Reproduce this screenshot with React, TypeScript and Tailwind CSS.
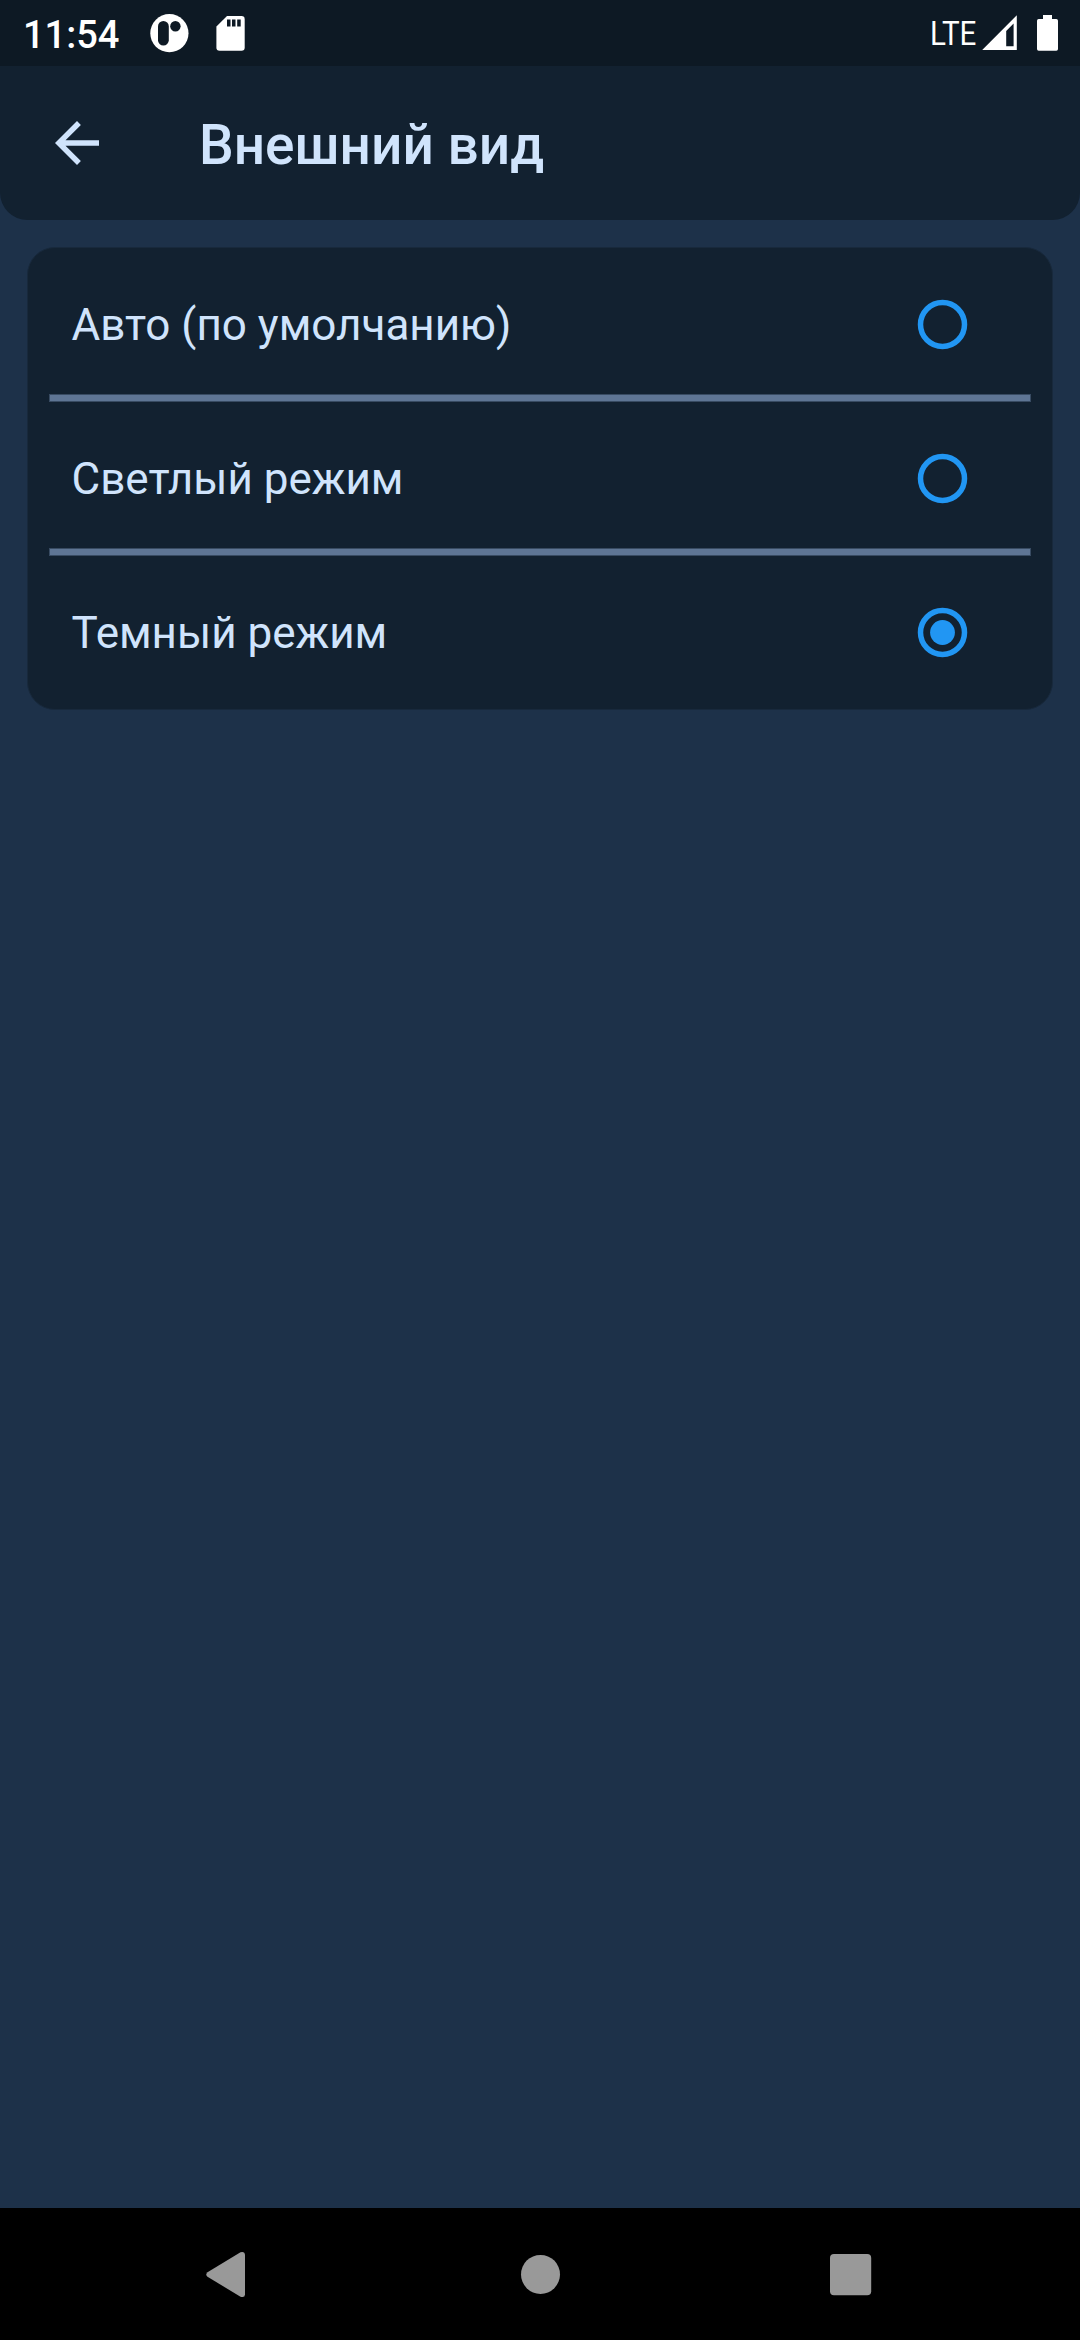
import { useState } from "react";

const options = ["Авто (по умолчанию)", "Светлый режим", "Темный режим"];

function StatusBar() {
  return (
    <div className="flex h-[66px] w-full items-center justify-between bg-[#0d1924] text-white">
      <div className="flex h-full items-center pl-[23px]">
        <span className="w-[123px] pt-[4px] text-[38px] leading-[66px] font-medium whitespace-nowrap">11:54</span>
        <svg className="h-[66px] w-[110px]" viewBox="146 0 110 66">
          <circle cx="169.4" cy="33.2" r="19.1" fill="#fff" />
          <rect x="158" y="21" width="10.8" height="24.6" rx="5.4" fill="#0d1924" />
          <circle cx="175.4" cy="26.3" r="5.2" fill="#0d1924" />
          <path
            d="M227 16H241.5a3.2 3.2 0 0 1 3.2 3.2V47.6a3.2 3.2 0 0 1-3.2 3.2H219.6a3.2 3.2 0 0 1-3.2-3.2V26.5Z"
            fill="#fff"
          />
          <path d="M227 19.5h3.5v7h-3.5zM232 19.5h3.5v7h-3.5zM237.2 19.5h3.5v7h-3.5z" fill="#0d1924" />
        </svg>
      </div>
      <div className="flex h-full items-center">
        <span className="w-[50px] origin-left scale-x-[0.87] text-[34px] leading-[66px] whitespace-nowrap">LTE</span>
        <svg className="h-[66px] w-[100px]" viewBox="980 0 100 66">
          <path
            fillRule="evenodd"
            d="M982.2 50L1016.8 15.3V50ZM1006.2 31V46.2H1013.6V23.6Z"
            fill="#fff"
          />
          <path
            d="M1043 15h9v4h4.3a1.7 1.7 0 0 1 1.7 1.7V49a1.7 1.7 0 0 1-1.7 1.7h-17.6a1.7 1.7 0 0 1-1.7-1.7V20.7a1.7 1.7 0 0 1 1.7-1.7H1043z"
            fill="#fff"
          />
        </svg>
      </div>
    </div>
  );
}

function Radio({ checked }: { checked: boolean }) {
  return (
    <svg className="size-[51px]" viewBox="0 0 51 51" fill="none">
      <circle cx="25.5" cy="25.5" r="22" stroke="#2196f3" strokeWidth="5.5" />
      {checked && <circle cx="25.5" cy="25.5" r="12.4" fill="#2196f3" />}
    </svg>
  );
}

export default function App() {
  const [selected, setSelected] = useState(2);
  return (
    <div className="flex h-[2340px] w-[1080px] flex-col overflow-hidden bg-[#1d3149] font-[Roboto,sans-serif] text-[#d0e4fc]">
      <div className="rounded-b-[27.5px] bg-[#122130]">
        <StatusBar />
        <header className="flex h-[154px] items-center pl-[44px]">
          <button className="size-[66px]" aria-label="Назад">
            <svg className="size-[66px]" viewBox="0 0 24 24" fill="currentColor">
              <path d="M20 11H7.83l5.59-5.59L12 4l-8 8 8 8 1.41-1.41L7.83 13H20v-2z" />
            </svg>
          </button>
          <h1 className="ml-[89px] pt-[3px] text-[55px] leading-[66px] font-medium whitespace-nowrap">Внешний вид</h1>
        </header>
      </div>

      <main className="flex-1 px-[27px] pt-[27px]">
        <div className="rounded-[28px] border border-[#18293c] bg-[#122130]" role="radiogroup">
          {options.map((label, i) => (
            <div key={label} className={i < 2 ? "h-[154px] px-[21px]" : "h-[153px] px-[21px]"}>
              <div
                role="radio"
                aria-checked={selected === i}
                onClick={() => setSelected(i)}
                className={
                  i < 2
                    ? "flex h-[146px] items-center justify-between pt-[7px] pr-[63px] pl-[22.5px]"
                    : "flex h-[153px] items-center justify-between pr-[63px] pl-[22.5px]"
                }
              >
                <span className="text-[44px] leading-[52px] whitespace-nowrap">{label}</span>
                <Radio checked={selected === i} />
              </div>
              {i < 2 && <div className="h-2 border border-[#384b62] bg-[#5e7594]" />}
            </div>
          ))}
        </div>
      </main>

      <nav className="h-[132px] bg-black">
        <svg className="h-[132px] w-[1080px]" viewBox="0 0 1080 132" fill="#999">
          <path d="M207.5 64.2L240.5 44.3Q244.8 43.2 245 47V86.5Q244.8 90 240.5 88.7L207.5 68.8Q205 66.5 207.5 64.2Z" />
          <circle cx="540.5" cy="66.4" r="19.5" />
          <rect x="830" y="46" width="41.2" height="41.2" rx="4" />
        </svg>
      </nav>
    </div>
  );
}
